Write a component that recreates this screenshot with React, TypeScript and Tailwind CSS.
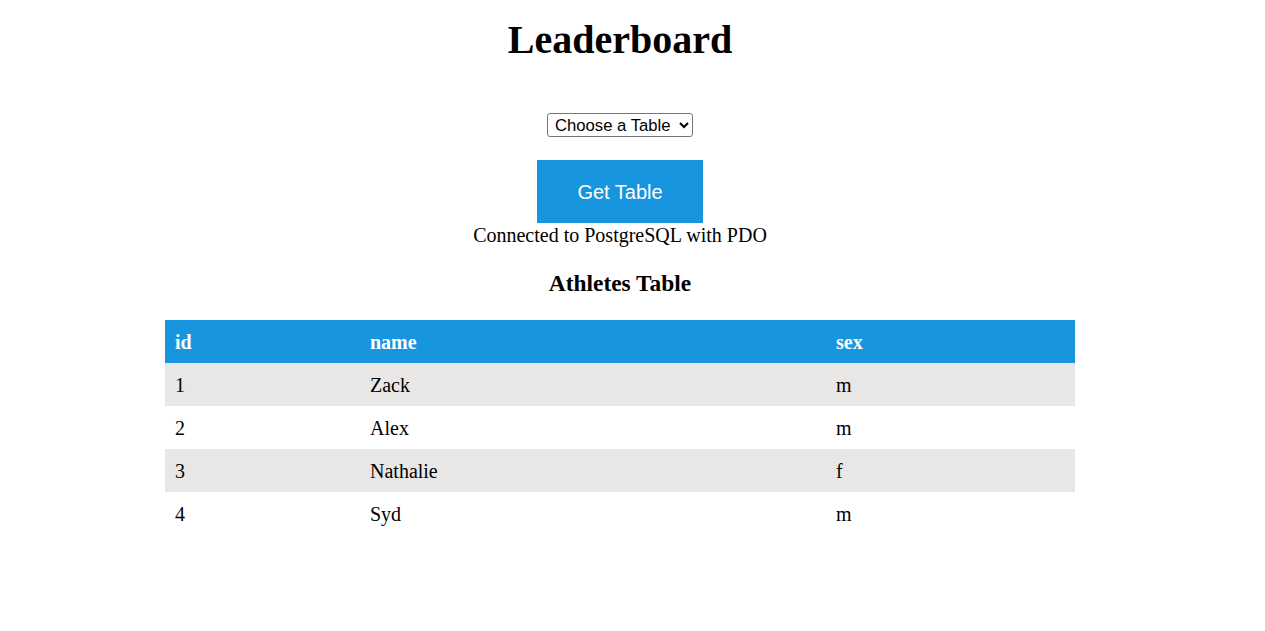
const athletes = [
  { id: 1, name: 'Zack', sex: 'm' },
  { id: 2, name: 'Alex', sex: 'm' },
  { id: 3, name: 'Nathalie', sex: 'f' },
  { id: 4, name: 'Syd', sex: 'm' },
]

export default function App() {
  return (
    <div className="flex flex-col items-center w-[1240px] min-h-[631px] bg-white text-black font-['Liberation_Serif',serif] text-[20px]">
      <h1 className="mt-[17px] text-[40px] leading-[46px] font-bold">Leaderboard</h1>

      <select className="mt-[50px] w-[146px] h-[24px] border border-[#767676] rounded-[3px] bg-white text-[16.67px] font-['Liberation_Sans',Arial,sans-serif] pl-[3px]">
        <option>Choose a Table</option>
        <option>Athletes</option>
      </select>

      <button className="mt-[23px] w-[166px] h-[63px] bg-[#1795de] text-white text-[20px] font-['Liberation_Sans',Arial,sans-serif]">
        Get Table
      </button>

      <p className="pt-[1px] leading-[23px]">Connected to PostgreSQL with PDO</p>

      <h3 className="mt-[23px] text-[23.4px] leading-[27px] font-bold">Athletes Table</h3>

      <table className="mt-[23px] w-[910px] border-collapse text-left">
        <thead>
          <tr className="bg-[#1795de] text-white">
            <th className="w-[195px] px-[10px] pt-[11px] pb-[9px] leading-[23px] font-bold">id</th>
            <th className="w-[466px] px-[10px] pt-[11px] pb-[9px] leading-[23px] font-bold">name</th>
            <th className="px-[10px] pt-[11px] pb-[9px] leading-[23px] font-bold">sex</th>
          </tr>
        </thead>
        <tbody>
          {athletes.map((a, i) => (
            <tr key={a.id} className={i % 2 === 0 ? 'bg-[#e8e7e6]' : 'bg-white'}>
              <td className="px-[10px] pt-[11px] pb-[9px] leading-[23px]">{a.id}</td>
              <td className="px-[10px] pt-[11px] pb-[9px] leading-[23px]">{a.name}</td>
              <td className="px-[10px] pt-[11px] pb-[9px] leading-[23px]">{a.sex}</td>
            </tr>
          ))}
        </tbody>
      </table>
    </div>
  )
}
